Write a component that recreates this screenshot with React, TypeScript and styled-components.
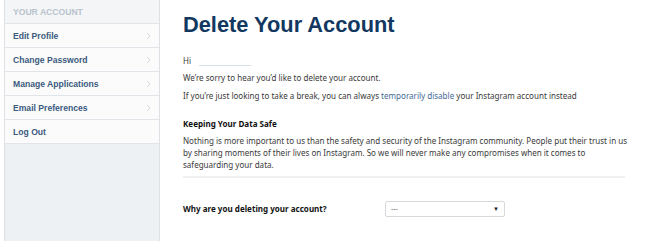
import React from "react";
import styled, { createGlobalStyle } from "styled-components";

const Global = createGlobalStyle`
  html, body { margin: 0; padding: 0; background: #ffffff; }
  body { width: 650px; height: 241px; overflow: hidden; }
  #root { height: 241px; }
`;

const Page = styled.div`
  display: flex;
  height: 241px;
  padding-left: 4px;
  box-sizing: border-box;
`;

const Sidebar = styled.nav`
  width: 156px;
  flex: none;
  box-sizing: border-box;
  background: #edf1f4;
  border-left: 1px solid #dde1e6;
  border-right: 1px solid #dde1e6;
  display: flex;
  flex-direction: column;
`;

const SideHeader = styled.div`
  height: 24px;
  box-sizing: border-box;
  display: flex;
  align-items: center;
  padding-left: 8px;
  background: #f4f5f6;
  border-bottom: 1px solid #e1e4e8;
  color: #b9c3ce;
  font: bold 8.6px "Liberation Sans", Arial, sans-serif;
  text-transform: uppercase;
`;

const SideItem = styled.a`
  height: 24px;
  box-sizing: border-box;
  display: flex;
  align-items: center;
  justify-content: space-between;
  padding: 0 8px 0 8px;
  background: #fbfbfb;
  border-bottom: 1px solid #e1e4e8;
  color: #3a5a80;
  font: bold 8.6px "Liberation Sans", Arial, sans-serif;
  text-decoration: none;
`;

const Chevron = () => (
  <svg width="5" height="8" viewBox="0 0 5 8">
    <polyline points="1,1 4,4 1,7" fill="none" stroke="#d3d6da" strokeWidth="1" />
  </svg>
);

const Main = styled.main`
  flex: 1;
  padding: 13px 0 0 23px;
  font-family: "Noto Sans", "Open Sans", sans-serif;
  font-size: 8.05px;
  line-height: 12px;
  color: #3a3a3a;
`;

const Title = styled.h1`
  margin: 0;
  font: bold 21.8px/24px "Liberation Sans", Arial, sans-serif;
  color: #12385f;
`;

const Para = styled.p<{ $mt: number; $width?: number }>`
  margin: ${(p) => p.$mt}px 0 0 0;
  max-width: ${(p) => (p.$width ? `${p.$width}px` : "none")};
`;

const NameBlur = styled.span`
  display: inline-block;
  width: 52px;
  height: 8px;
  margin-left: 8px;
  border-bottom: 1px solid #d6e0ec;
  vertical-align: -2px;
`;

const Link = styled.a`
  color: #3f6a96;
  text-decoration: none;
`;

const SectionTitle = styled.h3`
  margin: 16px 0 0 0;
  font-size: 8.05px;
  line-height: 12px;
  font-weight: bold;
  color: #111;
`;

const Rule = styled.hr`
  margin: 5px 0 0 0;
  width: 442px;
  border: none;
  height: 2px;
  background: #f0f0f0;
`;

const FormRow = styled.div`
  margin-top: 23px;
  display: flex;
  align-items: center;
`;

const Label = styled.label`
  width: 202px;
  font-weight: bold;
  color: #111;
`;

const Select = styled.div`
  width: 120px;
  height: 16px;
  box-sizing: border-box;
  border: 1px solid #d9d9d9;
  border-radius: 2px;
  display: flex;
  align-items: center;
  justify-content: space-between;
  padding: 0 5px 0 5px;
  color: #555;
  font-size: 7px;
`;

const Arrow = styled.span`
  font-size: 6px;
  color: #222;
`;

const items = ["Edit Profile", "Change Password", "Manage Applications", "Email Preferences", "Log Out"];

export default function App() {
  return (
    <>
      <Global />
      <Page>
        <Sidebar>
          <SideHeader>Your Account</SideHeader>
          {items.map((t, i) => (
            <SideItem key={t} href="#">
              <span>{t}</span>
              {i < items.length - 1 && <Chevron />}
            </SideItem>
          ))}
        </Sidebar>
        <Main>
          <Title>Delete Your Account</Title>
          <Para $mt={18}>
            Hi<NameBlur />
          </Para>
          <Para $mt={5}>We’re sorry to hear you’d like to delete your account.</Para>
          <Para $mt={6}>
            If you’re just looking to take a break, you can always <Link href="#">temporarily disable</Link> your
            Instagram account instead
          </Para>
          <SectionTitle>Keeping Your Data Safe</SectionTitle>
          <Para $mt={5} $width={448}>
            Nothing is more important to us than the safety and security of the Instagram community. People put their
            trust in us by sharing moments of their lives on Instagram. So we will never make any compromises when it
            comes to safeguarding your data.
          </Para>
          <Rule />
          <FormRow>
            <Label>Why are you deleting your account?</Label>
            <Select>
              <span>---</span>
              <Arrow>▼</Arrow>
            </Select>
          </FormRow>
        </Main>
      </Page>
    </>
  );
}
